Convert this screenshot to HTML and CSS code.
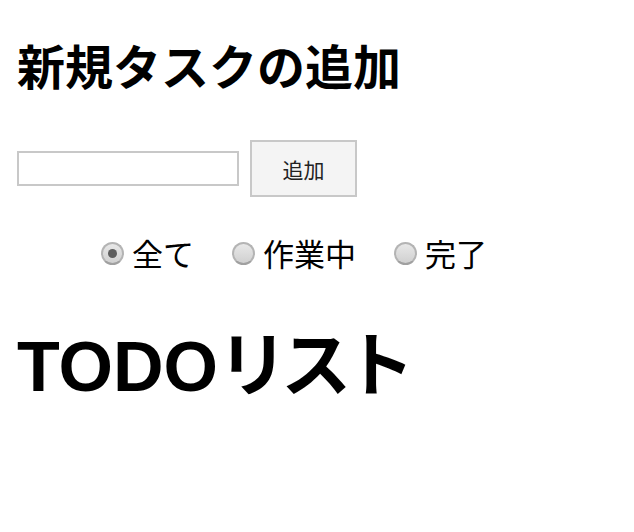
FILE: index.html
```html
<!DOCTYPE html>
<html lang="ja">
<head>
<meta charset="utf-8">
<link rel="stylesheet" href="styles.css">
</head>
<body>
<h2 class="title">新規タスクの追加</h2>
<div class="add-row">
  <input class="task-input" type="text">
  <button class="add-btn">追加</button>
</div>
<div class="filters">
  <label class="filter"><span class="radio checked"></span>全て</label>
  <label class="filter"><span class="radio"></span>作業中</label>
  <label class="filter"><span class="radio"></span>完了</label>
</div>
<h1 class="list-title">TODO<span class="kana">リスト</span></h1>
</body>
</html>
```
FILE: styles.css
```css
body {
  margin: 0;
  padding: 0 17px;
  font-family: "Noto Sans CJK JP", "Liberation Sans", sans-serif;
  color: #000;
  background: #fff;
}
.title {
  margin: 0;
  padding-top: 36px;
  font-size: 48px;
  line-height: 56px;
  font-weight: 700;
}
.add-row {
  display: flex;
  align-items: center;
  gap: 11px;
  margin-top: 48px;
}
.task-input {
  width: 222px;
  height: 35px;
  box-sizing: border-box;
  border: 2px solid #c8c8c8;
  margin: 0;
  padding: 0;
}
.add-btn {
  width: 107px;
  height: 57px;
  box-sizing: border-box;
  border: 2px solid #c8c8c8;
  background: #f4f4f4;
  font-family: "Noto Sans CJK JP", sans-serif;
  font-size: 21px;
  color: #222;
  margin: 0;
  padding: 0;
}
.filters {
  display: flex;
  gap: 38px;
  margin-top: 36px;
  margin-left: 84px;
  font-size: 31px;
  line-height: 40px;
}
.filter {
  display: flex;
  align-items: center;
  gap: 8px;
}
.radio {
  width: 19px;
  height: 19px;
  border-radius: 50%;
  border: 2px solid #b4b4b4;
  border-bottom-color: #a0a0a0;
  background: linear-gradient(#e8e8e8, #d0d0d0);
  position: relative;
  box-sizing: content-box;
}
.radio.checked::after {
  content: "";
  position: absolute;
  left: 5px;
  top: 5px;
  width: 9px;
  height: 9px;
  border-radius: 50%;
  background: #5e5e5e;
}
.list-title {
  margin: 0;
  margin-top: 48px;
  font-family: "Liberation Sans", "Noto Sans CJK JP", sans-serif;
  font-size: 70px;
  line-height: 80px;
  font-weight: 700;
}
.kana {
  font-family: "Noto Sans CJK JP", sans-serif;
  font-feature-settings: "palt";
  letter-spacing: 2px;
  margin-left: 4px;
}
```
